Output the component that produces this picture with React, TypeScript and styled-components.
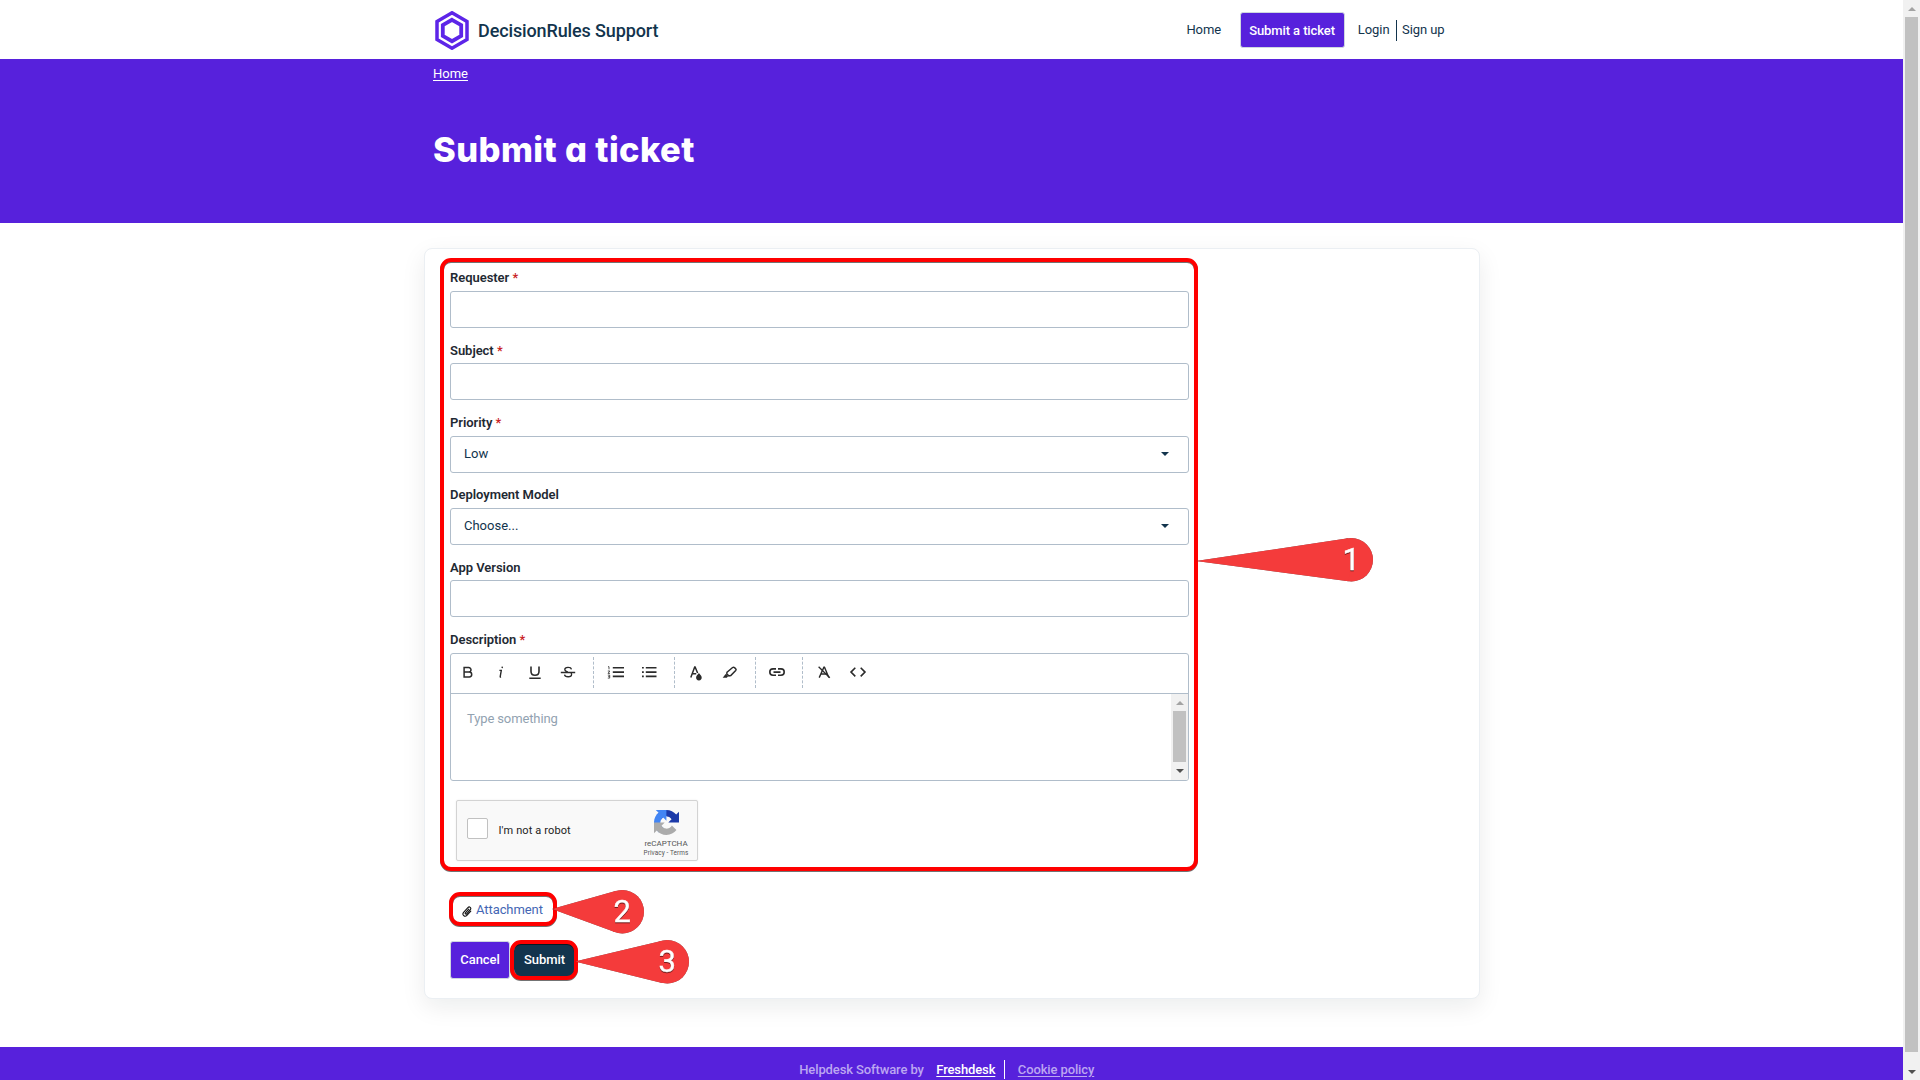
import React from 'react';
import styled, { createGlobalStyle } from 'styled-components';

const purple = '#5721dc';
const navy = '#12344d';
const line = '#b0bdca';

const GlobalStyle = createGlobalStyle`
  *, *::before, *::after { box-sizing: border-box; }
  body { margin: 0; background: #fff; overflow: hidden; }
  body, input, button { font-family: Roboto, "Liberation Sans", sans-serif; }
`;

const Window = styled.div`
  display: flex;
  width: 1920px;
  height: 1080px;
  overflow: hidden;
  font-size: 13px;
  color: ${navy};
`;

const Page = styled.div`
  display: flex;
  flex-direction: column;
  width: 1903px;
  height: 1080px;
`;

const Header = styled.header`
  display: flex;
  align-items: center;
  height: 59px;
  padding: 0 458.5px 0 435px;
`;

const Brand = styled.a`
  display: flex;
  align-items: center;
  gap: 9px;
  padding-top: 2px;
  font-size: 18px;
  font-weight: 500;
  line-height: 24px;
  letter-spacing: -0.12px;
`;

const Nav = styled.nav`
  display: flex;
  align-items: center;
  margin-left: auto;
  line-height: 20px;
`;

const NavLink = styled.a<{ $gap: number }>`
  margin-right: ${(p) => p.$gap}px;
  letter-spacing: -0.08px;
`;

const NavButton = styled.a`
  display: flex;
  align-items: center;
  justify-content: center;
  width: 105px;
  height: 36px;
  margin: 1px 13.3px 0 0;
  padding-top: 1px;
  border: 1px solid #cfd7df;
  border-radius: 3px;
  background: ${purple};
  color: #fff;
  font-weight: 500;
  letter-spacing: -0.1px;
`;

const NavDivider = styled.span`
  width: 1px;
  height: 21px;
  margin: 1px 5px 0 6.5px;
  background: ${navy};
`;

const Banner = styled.section`
  height: 164px;
  padding: 4px 433px 0;
  background: ${purple};
  color: #fff;
`;

const Crumb = styled.a`
  display: block;
  line-height: 22px;
  text-decoration: underline;
  text-underline-offset: 2px;
`;

const Title = styled.h1`
  margin: 41px 0 0;
  font-family: Inter, "Open Sans", sans-serif;
  font-feature-settings: "cv11";
  font-size: 34.5px;
  font-weight: 800;
  line-height: 48px;
  letter-spacing: 0.4px;
  white-space: nowrap;
`;

const Main = styled.main`
  display: flex;
  justify-content: center;
  height: 824px;
  padding: 25px 0 0 1px;
`;

const Card = styled.section`
  width: 1056px;
  height: 751px;
  padding: 18px 0 0 25px;
  border: 1px solid #ebeff3;
  border-radius: 8px;
  background: #fff;
  box-shadow: 0 8px 24px rgba(0, 20, 20, 0.08);
`;

const Form = styled.form`
  display: flex;
  flex-direction: column;
  width: 739px;
`;

const Field = styled.div`
  height: 72.33px;
`;

const Label = styled.label`
  display: block;
  height: 24px;
  padding-top: 0.3px;
  line-height: 21px;
  font-weight: 600;
  letter-spacing: -0.04px;
  color: #1f2a33;
`;

const Required = styled.span`
  color: #c82124;
  font-weight: 500;
`;

const Input = styled.input`
  display: block;
  width: 100%;
  height: 37px;
  border: 1px solid ${line};
  border-radius: 3px;
  background: #fff;
  outline: none;
`;

const Select = styled.div`
  display: flex;
  align-items: center;
  justify-content: space-between;
  height: 37px;
  padding: 0 19px 2px 13px;
  border: 1px solid ${line};
  border-radius: 3px;
`;

const Caret = styled.span`
  margin-top: 2px;
  border: 4px solid transparent;
  border-top-color: ${navy};
  border-bottom: 0;
`;

const Editor = styled.div`
  height: 128px;
  border: 1px solid ${line};
  border-radius: 3px;
  overflow: hidden;
`;

const Toolbar = styled.div`
  display: flex;
  align-items: center;
  height: 40px;
  padding-bottom: 1.5px;
  border-bottom: 1px solid ${line};
`;

const Tool = styled.span`
  display: flex;
  justify-content: center;
  width: 33.5px;
  svg { display: block; }
`;

const ToolDivider = styled.span`
  width: 1px;
  height: 31px;
  margin: 0 4.8px 0 8px;
  border-left: 1px dashed ${line};
`;

const EditArea = styled.div`
  display: flex;
  justify-content: space-between;
  height: 86px;
`;

const Placeholder = styled.span`
  padding: 15px 0 0 16px;
  line-height: 20px;
  letter-spacing: -0.12px;
  color: #92a2b1;
`;

const Bar = styled.div<{ $height: number }>`
  display: flex;
  flex-direction: column;
  align-items: center;
  flex: none;
  width: 17px;
  height: ${(p) => p.$height}px;
  background: #f1f1f1;
`;

const Arrow = styled.span<{ $down?: boolean }>`
  display: flex;
  align-items: center;
  justify-content: center;
  height: 17px;
  padding-top: ${(p) => (p.$down ? 0 : 1)}px;
  &::before {
    content: "";
    border: 4px solid transparent;
    ${(p) => (p.$down
      ? 'border-top-color: #505050; border-bottom-width: 0;'
      : 'border-bottom-color: #a3a3a3; border-top-width: 0;')}
  }
`;

const Thumb = styled.span<{ $height: number }>`
  width: 13px;
  height: ${(p) => p.$height}px;
  margin-bottom: auto;
  background: #c1c1c1;
`;

const Captcha = styled.div`
  display: flex;
  align-items: flex-start;
  width: 242px;
  height: 61px;
  margin: 19px 0 0 6px;
  border: 1px solid #d3d3d3;
  border-radius: 2px;
  background: #f9f9f9;
  box-shadow: 0 0 2px rgba(0, 0, 0, 0.08);
  color: #222;
`;

const CheckBox = styled.span`
  width: 21px;
  height: 21px;
  margin: 17px 0 0 10px;
  border: 1.5px solid #c1c1c1;
  border-radius: 2px;
  background: #fff;
`;

const CaptchaText = styled.span`
  margin: 22px 0 0 10.5px;
  font-size: 11px;
  line-height: 16px;
  letter-spacing: 0.12px;
`;

const CaptchaBrand = styled.div`
  display: flex;
  flex-direction: column;
  align-items: center;
  width: 48px;
  margin: 9px 7px 0 auto;
  color: #555;
  svg { display: block; }
`;

const CaptchaName = styled.span`
  margin-top: 3px;
  font-size: 8px;
  line-height: 11px;
`;

const CaptchaLinks = styled.span`
  margin-top: -1px;
  font-size: 6.4px;
  line-height: 10px;
  white-space: nowrap;
  letter-spacing: 0.1px;
`;

const Attach = styled.a`
  display: flex;
  align-items: center;
  gap: 4px;
  height: 20px;
  margin: 39px 0 0 12px;
  letter-spacing: -0.08px;
  color: #4466b4;
  svg { margin-top: 3px; }
`;

const Actions = styled.div`
  display: flex;
  gap: 4px;
  margin-top: 21px;
`;

const Button = styled.button<{ $dark?: boolean }>`
  width: ${(p) => (p.$dark ? 61 : 60)}px;
  height: ${(p) => (p.$dark ? 36 : 38)}px;
  padding: 0 0 1px;
  border: 1px solid ${(p) => (p.$dark ? navy : '#cfd7df')};
  border-radius: ${(p) => (p.$dark ? 9 : 3)}px;
  background: ${(p) => (p.$dark ? navy : purple)};
  color: #fff;
  font-size: 13px;
  font-weight: 500;
  letter-spacing: -0.05px;
  align-self: center;
`;

const Footer = styled.footer`
  display: flex;
  justify-content: center;
  height: 33px;
  padding: 13px 9.5px 0 0;
  background: ${purple};
  color: #bca6f1;
  font-weight: 500;
  line-height: 20px;
  letter-spacing: -0.12px;
`;

const FooterLink = styled.a<{ $bright?: boolean }>`
  margin-left: 12.5px;
  color: ${(p) => (p.$bright ? '#fff' : '#bca6f1')};
  text-decoration: underline;
  text-underline-offset: 2px;
`;

const FooterDivider = styled.span`
  width: 1px;
  height: 19px;
  margin-left: 9px;
  background: #fff;
`;

/* Annotations sit over the page, at free positions. */
const Outline = styled.div<{ $x: number; $y: number; $w: number; $h: number }>`
  position: absolute;
  left: ${(p) => p.$x}px;
  top: ${(p) => p.$y}px;
  width: ${(p) => p.$w}px;
  height: ${(p) => p.$h}px;
  border: 4px solid #f00;
  border-radius: 11px;
  filter: drop-shadow(0 1px 0.4px rgba(0, 0, 0, 0.55));
  pointer-events: none;
`;

const CalloutSvg = styled.svg`
  position: absolute;
  left: 0;
  top: 0;
  overflow: visible;
  pointer-events: none;
  filter: drop-shadow(0 0.8px 0.4px rgba(0, 0, 0, 0.6));
  text {
    font-family: Roboto, sans-serif;
    font-size: 31px;
    font-weight: 400;
    fill: #fff;
    stroke: #fff;
    stroke-width: 0.4px;
    text-anchor: middle;
    filter: drop-shadow(0 1px 0.6px rgba(0, 0, 0, 0.55));
  }
`;

function Callout({ tip, center, label }: { tip: [number, number]; center: [number, number]; label: string }) {
  const r = 21.7;
  const dx = tip[0] - center[0];
  const dy = tip[1] - center[1];
  const base = Math.atan2(dy, dx);
  const spread = Math.acos(r / Math.hypot(dx, dy));
  const at = (a: number) => `${center[0] + r * Math.cos(a)},${center[1] + r * Math.sin(a)}`;
  return (
    <CalloutSvg width="1" height="1">
      <circle cx={center[0]} cy={center[1]} r={r} fill="#f43b3b" />
      <polygon points={`${tip[0]},${tip[1]} ${at(base + spread)} ${center[0]},${center[1]} ${at(base - spread)}`} fill="#f43b3b" />
      <text x={center[0]} y={center[1] + 10.5}>{label}</text>
    </CalloutSvg>
  );
}

function ToolIcon({ children }: { children: React.ReactNode }) {
  return (
    <Tool>
      <svg width="20" height="20" viewBox="0 0 20 20" fill="none" stroke="#2b2b2b" strokeWidth="1.6">{children}</svg>
    </Tool>
  );
}

const Logo = () => (
  <svg width="34" height="39" viewBox="0 0 34 39" fill="none" stroke="#5d25e8">
    <path d="M17 1.8 32 10.6v17.8L17 37.2 2 28.4V10.6z" strokeWidth="3.5" />
    <path d="M17 8.8 26.2 14.2v10.6L17 30.2 7.8 24.8V14.2z" strokeWidth="3.8" />
  </svg>
);

const CaptchaLogo = () => (
  <svg width="25" height="25" viewBox="0 0 64 64">
    <path fill="#1c3aa9" d="M64 31.955a33 33 0 0 0-.037-1.379V4.658l-7.165 7.165C50.934 4.645 42.006.068 32.009.068c-10.403 0-19.645 4.958-25.482 12.637l11.744 11.868a15.5 15.5 0 0 1 4.755-5.337c2.058-1.606 4.975-2.919 8.983-2.919.484 0 .858.057 1.133.163 4.966.392 9.27 3.133 11.805 7.11l-8.313 8.313c10.53-.041 22.425-.066 27.366.052" />
    <path fill="#4285f4" d="M31.862.094a33 33 0 0 0-1.379.037H4.565l7.165 7.165C4.552 13.161-.025 22.09-.025 32.086c0 10.403 4.958 19.646 12.637 25.483L24.48 45.824a15.5 15.5 0 0 1-5.337-4.755c-1.606-2.058-2.919-4.975-2.919-8.983 0-.484.057-.858.163-1.133.392-4.966 3.133-9.27 7.11-11.805l8.313 8.313c-.041-10.53-.066-22.425.052-27.367" />
    <path fill="#ababab" d="M.001 32.045q.003.694.037 1.379v25.918l7.165-7.165c5.864 7.178 14.792 11.755 24.789 11.755 10.403 0 19.646-4.958 25.483-12.637L45.73 39.427a15.5 15.5 0 0 1-4.755 5.337c-2.058 1.606-4.975 2.919-8.983 2.919-.484 0-.858-.057-1.133-.163-4.966-.392-9.27-3.133-11.805-7.11l8.313-8.313c-10.53.041-22.425.066-27.366-.052" />
  </svg>
);

const Clip = () => (
  <svg width="10" height="11" viewBox="0 0 10 11" fill="none" stroke="#111" strokeWidth="1.1" strokeLinecap="round">
    <path d="M6.7 3.2 3.4 6.8c-.7.8.4 1.8 1.2 1l3.7-4.1c1.4-1.7-.8-3.7-2.4-2.1L1.6 6.3c-2 2.4 1.2 5.3 3.3 3L8.8 5.1" />
  </svg>
);

const Req = () => <Required> *</Required>;

export default function App() {
  return (
    <Window>
      <GlobalStyle />
      <Page>
        <Header>
          <Brand><Logo /><span>DecisionRules Support</span></Brand>
          <Nav>
            <NavLink $gap={18.5}>Home</NavLink>
            <NavButton>Submit a ticket</NavButton>
            <NavLink $gap={0}>Login</NavLink>
            <NavDivider />
            <NavLink $gap={0}>Sign up</NavLink>
          </Nav>
        </Header>
        <Banner>
          <Crumb>Home</Crumb>
          <Title>Submit a ticket</Title>
        </Banner>
        <Main>
          <Card>
            <Form>
              <Field><Label>Requester<Req /></Label><Input /></Field>
              <Field><Label>Subject<Req /></Label><Input /></Field>
              <Field><Label>Priority<Req /></Label><Select>Low<Caret /></Select></Field>
              <Field><Label>Deployment Model</Label><Select>Choose...<Caret /></Select></Field>
              <Field><Label>App Version</Label><Input /></Field>
              <Label>Description<Req /></Label>
              <Editor>
                <Toolbar>
                  <ToolIcon><path d="M6.1 5.5h4.6a2.2 2.2 0 0 1 0 4.6H6.1zm0 4.6h5.2a2.4 2.4 0 0 1 0 4.8H6.1z" strokeWidth="1.5" /></ToolIcon>
                  <ToolIcon><path d="M8.4 8.4h1.9L9.2 14.6q-.1.6.9.5M11.4 4.6l-.3 1.6" strokeWidth="1.4" /></ToolIcon>
                  <ToolIcon><path d="M6 4.5v4.7c0 5.4 8 5.4 8 0V4.5M4.3 16.3h11.4" /></ToolIcon>
                  <ToolIcon><path d="M13.4 7.3c-.4-2.6-6.6-2.6-6.6.2 0 1.2 1.2 1.9 3 2.4M6.5 12.6c.5 2.9 7.1 2.9 7.1-.2 0-.7-.2-1.2-.7-1.6M2.8 10.5h14.4" strokeWidth="1.3" /></ToolIcon>
                  <ToolDivider />
                  <ToolIcon>
                    <path d="M6.8 5.8H18M6.8 10.1H18M6.8 14.4H18" />
                    <path d="M2 4.7h1v2.6M1.8 9h2L2 11.4h2M1.8 13.1h1.9v3H1.8M2.2 14.6h1.4" strokeWidth=".8" />
                  </ToolIcon>
                  <ToolIcon><path d="M6.8 5.8h10.7M6.8 10.1h10.7M6.8 14.4h10.7M3 5.8h1.8M3 10.1h1.8M3 14.4h1.8" /></ToolIcon>
                  <ToolDivider />
                  <ToolIcon>
                    <path d="M4.8 15.4 8.7 5h.4l2.5 6M6.4 11.7h3.8" strokeWidth="1.5" />
                    <path d="M12.9 11c1.8 2 2.8 3.3 2.8 4.6a2.8 2.8 0 0 1-5.6 0c0-1.3 1-2.6 2.8-4.6z" fill="#2b2b2b" stroke="none" />
                  </ToolIcon>
                  <ToolIcon>
                    <path d="m7 10.2 5.6-4.7c.7-.5 1.3-.4 1.9.1l1.2 1.1c.6.6.5 1.1 0 1.7l-4.9 5.2-1.9.3-2.1-1.8z" strokeWidth="1.5" />
                    <path d="m5.6 11.9 2.5 2.4-1.3 1.5H2.7z" fill="#2b2b2b" stroke="none" />
                  </ToolIcon>
                  <ToolDivider />
                  <ToolIcon><path d="M9 6.9H6a3.2 3.2 0 0 0 0 6.4h3M11 6.9h3a3.2 3.2 0 0 1 0 6.4h-3M6.5 10.1h7" /></ToolIcon>
                  <ToolDivider />
                  <ToolIcon>
                    <path d="M5.2 15.6 9.9 5.2h.6l4.3 10.4M7.2 12h6" strokeWidth="1.4" />
                    <path d="m4.6 4.7 11.2 11" strokeWidth="1.3" />
                  </ToolIcon>
                  <ToolIcon><path d="M7.3 5.8 3 10.1l4.3 4.3M12.7 5.8l4.3 4.3-4.3 4.3" /></ToolIcon>
                </Toolbar>
                <EditArea>
                  <Placeholder>Type something</Placeholder>
                  <Bar $height={86}><Arrow /><Thumb $height={51} /><Arrow $down /></Bar>
                </EditArea>
              </Editor>
              <Captcha>
                <CheckBox />
                <CaptchaText>I'm not a robot</CaptchaText>
                <CaptchaBrand>
                  <CaptchaLogo />
                  <CaptchaName>reCAPTCHA</CaptchaName>
                  <CaptchaLinks>Privacy - Terms</CaptchaLinks>
                </CaptchaBrand>
              </Captcha>
              <Attach><Clip />Attachment</Attach>
              <Actions>
                <Button type="button">Cancel</Button>
                <Button type="button" $dark>Submit</Button>
              </Actions>
            </Form>
          </Card>
        </Main>
        <Footer>
          <span>Helpdesk Software by</span>
          <FooterLink $bright>Freshdesk</FooterLink>
          <FooterDivider />
          <FooterLink>Cookie policy</FooterLink>
        </Footer>
      </Page>
      <Bar $height={1080}><Arrow /><Thumb $height={1035} /><Arrow $down /></Bar>
      <Outline $x={440} $y={258} $w={758} $h={613} />
      <Outline $x={449} $y={892} $w={108} $h={34} />
      <Outline $x={510} $y={940} $w={68} $h={40} />
      <Callout tip={[1196, 561]} center={[1351.3, 559.8]} label="1" />
      <Callout tip={[552, 909]} center={[622.3, 911.7]} label="2" />
      <Callout tip={[575, 961.5]} center={[667.3, 961.8]} label="3" />
    </Window>
  );
}
